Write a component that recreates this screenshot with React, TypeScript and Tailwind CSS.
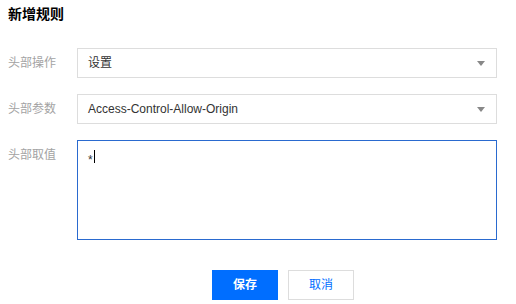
import React from 'react';

const font = { fontFamily: '"Liberation Sans", Arial, "Noto Sans CJK SC", sans-serif' };

const Arrow: React.FC = () => (
  <svg width="8" height="5" viewBox="0 0 8 5" className="shrink-0">
    <path d="M0 0 L8 0 L4 5 Z" fill="#888888" />
  </svg>
);

const SelectBox: React.FC<{ value: string }> = ({ value }) => (
  <div className="flex h-[30px] w-[420px] items-center justify-between border border-[#dddddd] bg-white pl-[10px] pr-[11px]">
    <span className="text-[12px] text-[#333333]">{value}</span>
    <Arrow />
  </div>
);

const Row: React.FC<{ label: string; children: React.ReactNode }> = ({ label, children }) => (
  <div className="flex items-start">
    <div className="w-[69px] shrink-0 text-[12px] leading-[30px] text-[#a3a3a3]">{label}</div>
    {children}
  </div>
);

export default function App() {
  return (
    <div className="h-[304px] w-[516px] overflow-hidden bg-white pl-[8px]" style={font}>
      <div className="pt-[4px] text-[14px] font-bold leading-[20px] text-[#000000]">新增规则</div>
      <div className="mt-[24px] flex flex-col gap-[16px]">
        <Row label="头部操作">
          <SelectBox value="设置" />
        </Row>
        <Row label="头部参数">
          <SelectBox value="Access-Control-Allow-Origin" />
        </Row>
        <Row label="头部取值">
          <div className="h-[100px] w-[420px] border border-[#2a6acf] bg-white pl-[10px] pt-[6px]">
            <span className="text-[12px] leading-[18px] text-[#333333]">*</span>
            <span className="ml-[1px] inline-block h-[13px] w-[1px] translate-y-[3px] bg-black align-top" />
          </div>
        </Row>
      </div>
      <div className="mt-[30px] flex gap-[10px] pl-[204px]">
        <button className="h-[30px] w-[66px] bg-[#006eff] text-[12px] font-bold text-white">保存</button>
        <button className="h-[30px] w-[66px] border border-[#dddddd] bg-white text-[12px] text-[#006eff]">取消</button>
      </div>
    </div>
  );
}
